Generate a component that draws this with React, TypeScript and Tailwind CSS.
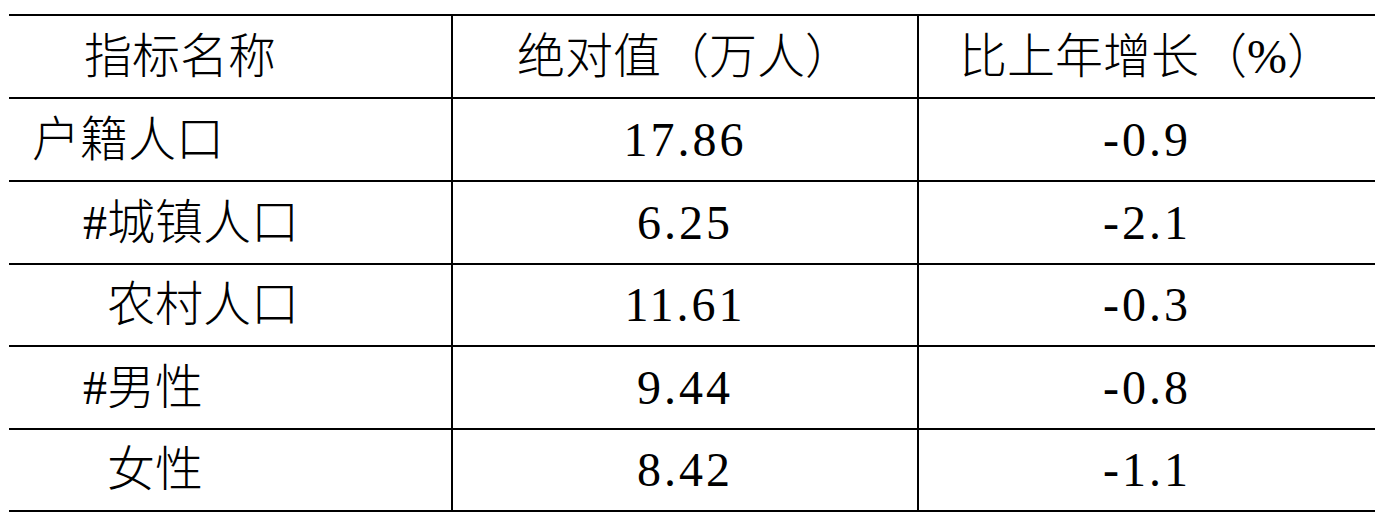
import React from "react";

const rows: { name: string; pl: string; abs: string; growth: string; h: string }[] = [
  { name: "户籍人口", pl: "pl-[23px]", abs: "17.86", growth: "-0.9", h: "h-[83px]" },
  { name: "#城镇人口", pl: "pl-[74px]", abs: "6.25", growth: "-2.1", h: "h-[83px]" },
  { name: "农村人口", pl: "pl-[98px]", abs: "11.61", growth: "-0.3", h: "h-[82px]" },
  { name: "#男性", pl: "pl-[74px]", abs: "9.44", growth: "-0.8", h: "h-[83px]" },
  { name: "女性", pl: "pl-[98px]", abs: "8.42", growth: "-1.1", h: "h-[82px]" },
];

export default function App() {
  return (
    <div
      className="w-[1376px] h-[513px] bg-white text-black pt-[14px] pl-[9px] overflow-hidden font-light"
      style={{ fontFamily: '"Liberation Serif", "Noto Sans CJK SC", serif' }}
    >
      <div className="w-[1366px] border-b-2 border-black">
        <div className="grid grid-cols-[442px_466px_1fr] h-[83px] border-t-2 border-black text-[48px] leading-none">
          <div className="flex items-center pl-[75px]">指标名称</div>
          <div className="flex items-center justify-center border-l-2 border-black">绝对值（万人）</div>
          <div className="flex items-center justify-center border-l-2 border-black">比上年增长（%）</div>
        </div>
        {rows.map((r) => (
          <div
            key={r.name}
            className={`grid grid-cols-[442px_466px_1fr] ${r.h} border-t-2 border-black text-[48px] leading-none`}
          >
            <div className={`flex items-center ${r.pl}`}>{r.name}</div>
            <div className="flex items-center justify-center border-l-2 border-black tracking-[3px]">{r.abs}</div>
            <div className="flex items-center justify-center border-l-2 border-black tracking-[3px]">{r.growth}</div>
          </div>
        ))}
      </div>
    </div>
  );
}
